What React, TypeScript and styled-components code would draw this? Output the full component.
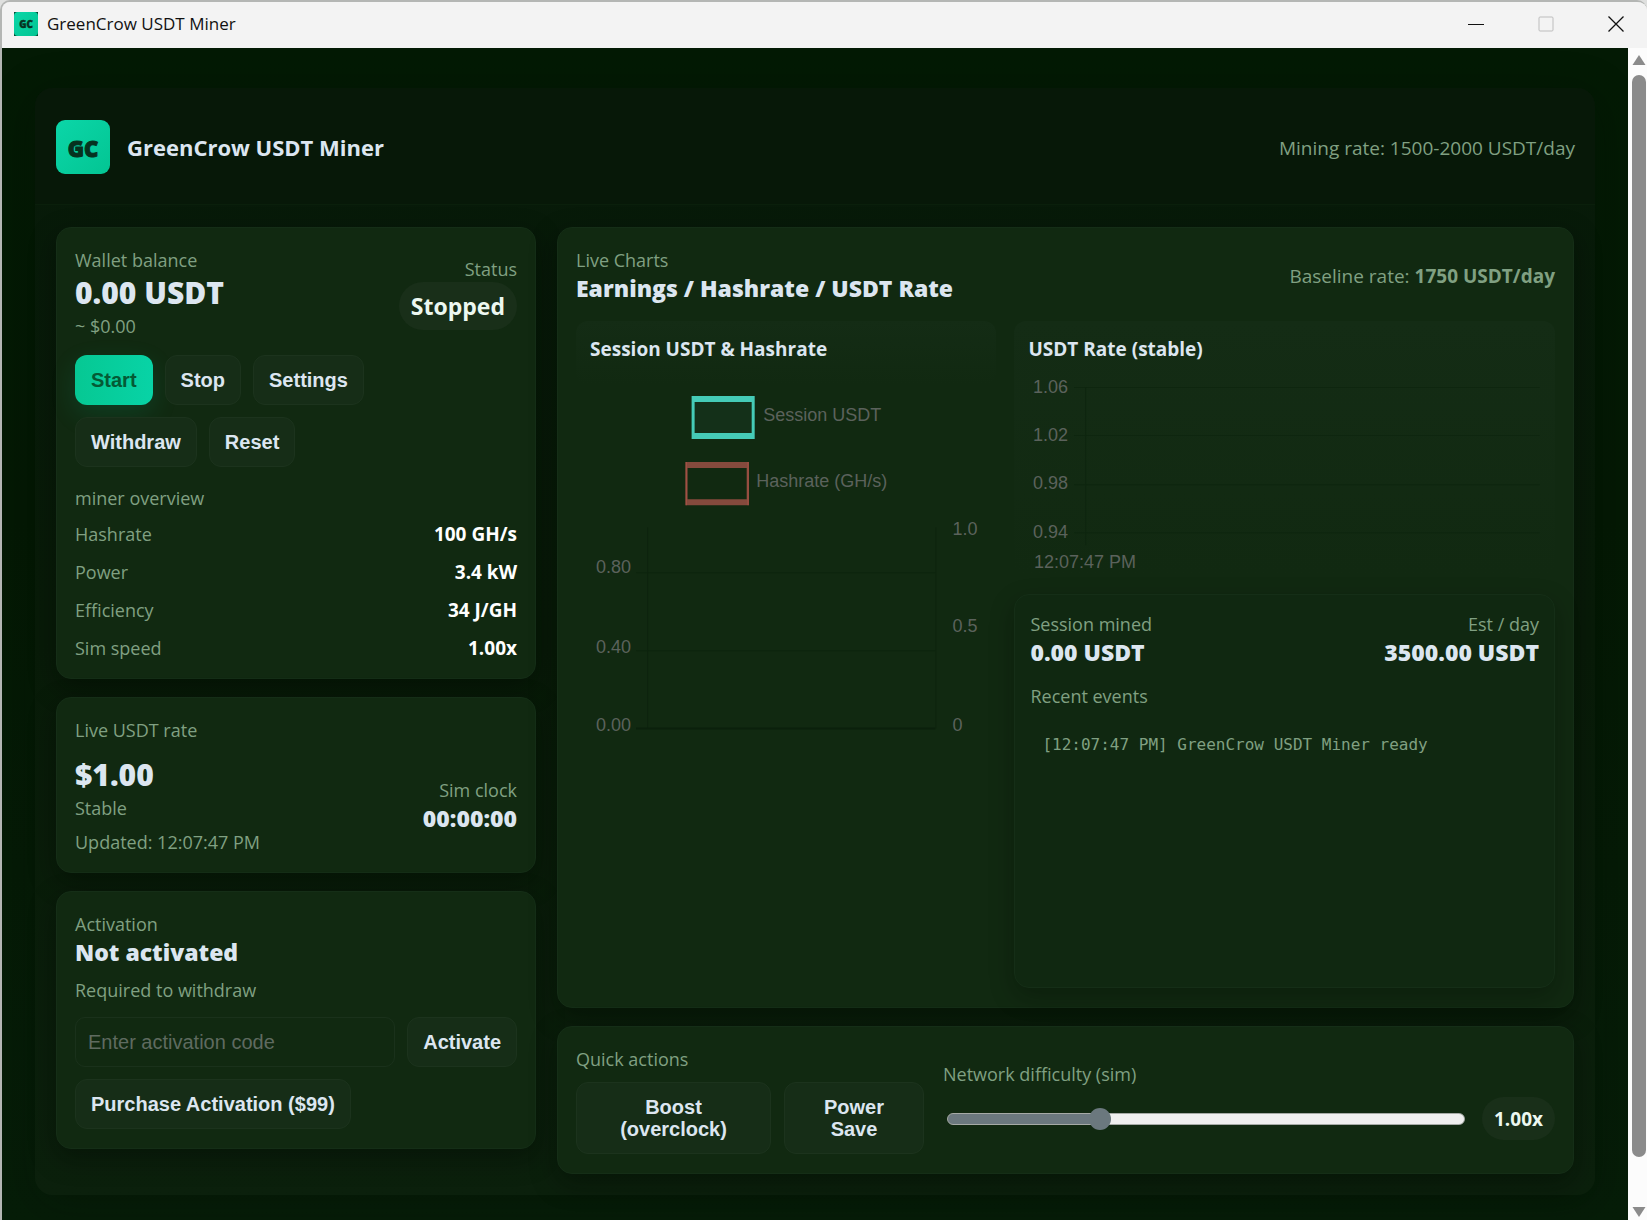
import React, { useState } from "react";
import styled, { createGlobalStyle, css } from "styled-components";

const muted = "#80a082";
const bright = "#dce6f0";
const ui = `"Open Sans", "Noto Sans", sans-serif`;
const arial = `"Liberation Sans", Arial, sans-serif`;

const GlobalStyle = createGlobalStyle`
  *, *::before, *::after { box-sizing: border-box; }
  body { margin: 0; background: #dfe0df; font-family: ${ui}; color: ${bright}; }
`;

const Window = styled.div`
  display: flex;
  flex-direction: column;
  min-height: 100vh;
  border-top: 2px solid #b4b6b4;
  border-left: 2px solid #b4b6b4;
  border-top-left-radius: 10px;
  border-top-right-radius: 10px;
  overflow: hidden;
`;

const TitleBar = styled.header`
  display: flex;
  align-items: center;
  gap: 9px;
  height: 46px;
  padding: 0 0 2px 12px;
  background: #f3f3f3;
  color: #111;
  font-size: 17px;
  line-height: 24px;
`;

const WindowButtons = styled.div`
  display: flex;
  margin-left: auto;
`;

const WindowButton = styled.button`
  display: flex;
  align-items: center;
  justify-content: center;
  width: 70px;
  height: 44px;
  padding: 0;
  border: 0;
  background: none;
  color: #111;
  &:last-child { width: 62px; margin-left: 4px; }
  &:disabled { color: #bdbdbd; }
`;

const Viewport = styled.div`
  display: flex;
  flex: 1;
`;

const Page = styled.main`
  flex: 1;
  min-width: 0;
  padding: 40px 33px 26px;
  background: linear-gradient(180deg, #031a04 0%, #041904 40%, #061d08 100%);
`;

const ScrollBar = styled.div`
  display: flex;
  flex-direction: column;
  align-items: center;
  width: 19px;
  padding: 6px 0 3px 3px;
  gap: 9px;
  background: #fcfcfc;
`;

const ScrollThumb = styled.div`
  flex: 1;
  width: 14px;
  margin-bottom: 40px;
  border-radius: 7px;
  background: #8b8b8b;
`;

const Shell = styled.div`
  border-radius: 18px;
  background: linear-gradient(180deg, #071a09 0%, #081b08 50%, #0b200c 100%);
  box-shadow: 0 9px 45px rgba(0, 10, 0, 0.25);
`;

const AppHeader = styled.div`
  display: flex;
  align-items: center;
  justify-content: space-between;
  padding: 32px 20px 30px 21px;
  border-bottom: 1px solid #0a1f0b;
  border-radius: 18px 18px 0 0;
  background: #071808;
`;

const Brand = styled.div`
  display: flex;
  align-items: center;
  gap: 17px;
`;

const BrandName = styled.h1`
  margin: 0;
  font-size: 22px;
  line-height: 30px;
  font-weight: 700;
`;

const Columns = styled.div`
  display: grid;
  grid-template-columns: 480px minmax(0, 1fr);
  gap: 21px;
  padding: 22px 21px 21px 21px;
`;

const Column = styled.div`
  display: flex;
  flex-direction: column;
  gap: 18px;
`;

const Card = styled.section<{ $tight?: boolean }>`
  padding: 19px 18px ${(p) => (p.$tight ? 17 : 19)}px;
  border: 1px solid #152e17;
  border-radius: 15px;
  background: #112911;
  box-shadow: 0 9px 27px rgba(0, 8, 0, 0.4);
`;

const EventsCard = styled(Card)`
  min-height: 394px;
  padding: 16px 15px;
  background: #102811;
  box-shadow: 0 9px 24px rgba(0, 10, 0, 0.3);
`;

const Split = styled.div<{ $top?: number }>`
  display: flex;
  align-items: center;
  justify-content: space-between;
  margin-top: ${(p) => p.$top ?? 0}px;
`;

const RightBlock = styled.div`
  display: flex;
  flex-direction: column;
  align-items: flex-end;
`;

const Label = styled.div<{ $top?: number }>`
  margin-top: ${(p) => p.$top ?? 0}px;
  color: ${muted};
  font-size: 18px;
  line-height: 26px;
`;

const RateNote = styled(Label)`
  padding-top: 2px;
  font-size: 19px;
`;

const Balance = styled.div`
  font-size: 30px;
  line-height: 40px;
  font-weight: 800;
`;

const Strong = styled.div`
  font-size: 23px;
  line-height: 30px;
  font-weight: 800;
`;

const Pill = styled.div<{ $small?: boolean }>`
  display: flex;
  align-items: center;
  height: ${(p) => (p.$small ? 43 : 48)}px;
  padding: 0 12px;
  border-radius: 24px;
  background: #192f19;
  color: #ecf8f0;
  font-weight: 700;
  font-size: ${(p) => (p.$small ? 19 : 23)}px;
`;

const Buttons = styled.div<{ $top: number }>`
  display: flex;
  flex-wrap: wrap;
  gap: 12px;
  margin-top: ${(p) => p.$top}px;
`;

const Button = styled.button<{ $primary?: boolean; $stacked?: boolean }>`
  height: 50px;
  padding: 0 15px;
  border: 1px solid #1c331d;
  border-radius: 12px;
  background: #162d17;
  color: ${bright};
  font: 700 20px/22px ${arial};
  ${(p) =>
    p.$primary &&
    css`
      padding: 0 16px;
      border: 0;
      background: linear-gradient(90deg, #06c893, #08d3a6);
      color: #045a35;
      box-shadow: 0 9px 27px rgba(6, 200, 150, 0.14);
    `}
  ${(p) =>
    p.$stacked &&
    css`
      height: 72px;
      padding: 0;
    `}
`;

const Stats = styled.dl`
  display: grid;
  gap: 12px;
  margin: 10px 0 0;
`;

const Stat = styled.div`
  display: flex;
  justify-content: space-between;
  color: ${muted};
  font-size: 18px;
  line-height: 26px;
  dd { margin: 0; color: #fff; font-size: 19px; font-weight: 700; }
`;

const CodeRow = styled.form`
  display: flex;
  gap: 12px;
  margin-top: 14px;
`;

const CodeInput = styled.input`
  flex: 1;
  min-width: 0;
  height: 50px;
  padding: 0 12px;
  border: 1px solid #1a311b;
  border-radius: 10px;
  background: transparent;
  color: ${bright};
  font: 20px ${arial};
  &::placeholder { color: #5f6b60; opacity: 1; }
`;

const Charts = styled.div`
  display: grid;
  grid-template-columns: minmax(0, 7fr) minmax(0, 9fr);
  align-items: start;
  gap: 18px;
  margin-top: 18px;
`;

const ChartBox = styled.div<{ $short?: boolean }>`
  height: ${(p) => (p.$short ? 64 : 255)}px;
  padding: 15px 14px;
  border-radius: 12px;
  background: linear-gradient(180deg, #142c15, #112911);
`;

const ChartTitle = styled.h2`
  margin: 0 0 8px;
  font-size: 19px;
  line-height: 26px;
  font-weight: 700;
`;

const ChartSvg = styled.svg`
  display: block;
  width: 100%;
  overflow: visible;
  font-family: ${arial};
  font-size: 18px;
  text { fill: #5b625c; }
`;

const Log = styled.pre`
  margin: 12px 0 0;
  padding: 12px;
  color: ${muted};
  font: 16px/24px "DejaVu Sans Mono", monospace;
`;

const Quick = styled.div`
  display: flex;
  align-items: flex-start;
  gap: 19px;
`;

const QuickButtons = styled.div`
  display: grid;
  grid-template-columns: 195px 140px;
  gap: 13px;
  margin-top: 10px;
`;

const Difficulty = styled.div`
  flex: 1;
  min-width: 0;
  padding-top: 15px;
  label { display: block; color: ${muted}; font-size: 18px; line-height: 26px; }
`;

const SliderRow = styled.div`
  display: flex;
  align-items: center;
  gap: 17px;
  margin-top: 10px;
`;

const Slider = styled.input`
  appearance: none;
  flex: 1;
  min-width: 0;
  height: 22px;
  margin: 0 0 0 4px;
  background: none;
  &::-webkit-slider-runnable-track {
    height: 12px;
    border: 1px solid #a6aaa6;
    border-radius: 6px;
    background: linear-gradient(90deg, #6b787e var(--fill), #efefef var(--fill));
    background-origin: border-box;
  }
  &::-webkit-slider-thumb {
    appearance: none;
    width: 22px;
    height: 22px;
    margin-top: -6px;
    border-radius: 50%;
    background: #6b787e;
  }
`;

const LogoText = styled.text`
  font: 800 22px ${ui};
  fill: #06321f;
  stroke: #06321f;
  stroke-width: 1px;
  text-anchor: middle;
`;

const stats = [
  ["Hashrate", "100 GH/s"],
  ["Power", "3.4 kW"],
  ["Efficiency", "34 J/GH"],
  ["Sim speed", "1.00x"],
];

function Logo({ size }: { size: number }) {
  const id = `logo-${size}`;
  return (
    <svg width={size} height={size} viewBox="0 0 54 54" aria-hidden="true">
      <defs>
        <linearGradient id={id} x1="0" y1="0" x2="1" y2="1">
          <stop offset="0" stopColor="#0bd6a8" />
          <stop offset="1" stopColor="#03c593" />
        </linearGradient>
      </defs>
      {size < 30 && <rect width="54" height="54" fill="#06452f" />}
      <rect width="54" height="54" rx="9" fill={`url(#${id})`} />
      <LogoText x="27" y="37">GC</LogoText>
    </svg>
  );
}

function SessionChart() {
  return (
    <ChartSvg viewBox="0 7 392 370">
      <g stroke="#0d240e">
        <path d="M46 209.500H345M46 287.500H345" />
        <path d="M57.500 164V365M345.500 164V365" />
      </g>
      <path d="M46 365H345" stroke="#0b200c" strokeWidth="2" />
      <rect x="102" y="33" width="62" height="42" fill="#143019" />
      <path d="M101.500 33h63v43h-63z M104.500 39v31h57v-31z" fill="#45cbb7" fillRule="evenodd" />
      <path d="M95.500 99h63v43h-63z M97.500 105v31h59v-31z" fill="#854a3d" fillRule="evenodd" />
      <path d="M96 99V142M158 99V142" stroke="#b4564b" />
      <text x="173" y="58">Session USDT</text>
      <text x="166" y="124">Hashrate (GH/s)</text>
      <text x="6" y="210">0.80</text>
      <text x="6" y="290">0.40</text>
      <text x="6" y="368">0.00</text>
      <text x="362" y="172">1.0</text>
      <text x="362" y="269">0.5</text>
      <text x="362" y="368">0</text>
    </ChartSvg>
  );
}

function RateChart() {
  return (
    <ChartSvg viewBox="0 0 512 200">
      <g stroke="#0e260f">
        <path d="M46 17.500H511M46 65.500H511M46 114.500H511M46 162.500H511" />
        <path d="M57.500 17V175" />
      </g>
      <text x="5" y="23">1.06</text>
      <text x="5" y="71">1.02</text>
      <text x="5" y="119">0.98</text>
      <text x="5" y="168">0.94</text>
      <text x="6" y="198">12:07:47 PM</text>
    </ChartSvg>
  );
}

export default function App() {
  const [difficulty, setDifficulty] = useState(1);
  const [code, setCode] = useState("");
  const fill = { "--fill": `${((difficulty - 0.2) / 2.8) * 100}%` } as React.CSSProperties;

  return (
    <>
      <GlobalStyle />
      <Window>
        <TitleBar>
          <Logo size={24} />
          <span>GreenCrow USDT Miner</span>
          <WindowButtons>
            <WindowButton aria-label="Minimize">
              <svg width="16" height="16"><path d="M0 8.500H16" stroke="currentColor" /></svg>
            </WindowButton>
            <WindowButton aria-label="Maximize" disabled>
              <svg width="16" height="16"><rect x="1" y="1" width="14" height="14" rx="1" fill="none" stroke="currentColor" /></svg>
            </WindowButton>
            <WindowButton aria-label="Close">
              <svg width="16" height="16"><path d="M.5.5l15 15M15.500.5l-15 15" stroke="currentColor" strokeWidth="1.300" /></svg>
            </WindowButton>
          </WindowButtons>
        </TitleBar>
        <Viewport>
          <Page>
            <Shell>
              <AppHeader>
                <Brand>
                  <Logo size={54} />
                  <BrandName>GreenCrow USDT Miner</BrandName>
                </Brand>
                <RateNote>Mining rate: 1500-2000 USDT/day</RateNote>
              </AppHeader>
              <Columns>
                <Column>
                  <Card $tight>
                    <Split>
                      <div>
                        <Label>Wallet balance</Label>
                        <Balance>0.00 USDT</Balance>
                        <Label>~ $0.00</Label>
                      </div>
                      <RightBlock>
                        <Label>Status</Label>
                        <Pill>Stopped</Pill>
                      </RightBlock>
                    </Split>
                    <Buttons $top={16}>
                      <Button $primary>Start</Button>
                      <Button>Stop</Button>
                      <Button>Settings</Button>
                    </Buttons>
                    <Buttons $top={12}>
                      <Button>Withdraw</Button>
                      <Button>Reset</Button>
                    </Buttons>
                    <Label $top={18}>miner overview</Label>
                    <Stats>
                      {stats.map(([name, value]) => (
                        <Stat key={name}>
                          <dt>{name}</dt>
                          <dd>{value}</dd>
                        </Stat>
                      ))}
                    </Stats>
                  </Card>
                  <Card $tight>
                    <Label>Live USDT rate</Label>
                    <Split $top={12}>
                      <div>
                        <Balance>$1.00</Balance>
                        <Label>Stable</Label>
                        <Label $top={8}>Updated: 12:07:47 PM</Label>
                      </div>
                      <RightBlock>
                        <Label>Sim clock</Label>
                        <Strong>00:00:00</Strong>
                      </RightBlock>
                    </Split>
                  </Card>
                  <Card>
                    <Label>Activation</Label>
                    <Strong>Not activated</Strong>
                    <Label $top={10}>Required to withdraw</Label>
                    <CodeRow onSubmit={(e) => e.preventDefault()}>
                      <CodeInput
                        aria-label="Activation code"
                        placeholder="Enter activation code"
                        value={code}
                        onChange={(e) => setCode(e.target.value)}
                      />
                      <Button type="submit">Activate</Button>
                    </CodeRow>
                    <Buttons $top={12}>
                      <Button>Purchase Activation ($99)</Button>
                    </Buttons>
                  </Card>
                </Column>
                <Column>
                  <Card>
                    <Split>
                      <div>
                        <Label>Live Charts</Label>
                        <Strong>Earnings / Hashrate / USDT Rate</Strong>
                      </div>
                      <RateNote>
                        Baseline rate: <b>1750 USDT/day</b>
                      </RateNote>
                    </Split>
                    <Charts>
                      <ChartBox $short>
                        <ChartTitle>Session USDT &amp; Hashrate</ChartTitle>
                        <SessionChart />
                      </ChartBox>
                      <Column>
                        <ChartBox>
                          <ChartTitle>USDT Rate (stable)</ChartTitle>
                          <RateChart />
                        </ChartBox>
                        <EventsCard>
                          <Split>
                            <div>
                              <Label>Session mined</Label>
                              <Strong>0.00 USDT</Strong>
                            </div>
                            <RightBlock>
                              <Label>Est / day</Label>
                              <Strong>3500.00 USDT</Strong>
                            </RightBlock>
                          </Split>
                          <Label $top={16}>Recent events</Label>
                          <Log>[12:07:47 PM] GreenCrow USDT Miner ready</Log>
                        </EventsCard>
                      </Column>
                    </Charts>
                  </Card>
                  <Card>
                    <Quick>
                      <div>
                        <Label>Quick actions</Label>
                        <QuickButtons>
                          <Button $stacked>Boost<br />(overclock)</Button>
                          <Button $stacked>Power<br />Save</Button>
                        </QuickButtons>
                      </div>
                      <Difficulty>
                        <label htmlFor="difficulty">Network difficulty (sim)</label>
                        <SliderRow>
                          <Slider
                            id="difficulty"
                            type="range"
                            min="0.2"
                            max="3"
                            step="0.1"
                            value={difficulty}
                            style={fill}
                            onChange={(e) => setDifficulty(Number(e.target.value))}
                          />
                          <Pill $small>{difficulty.toFixed(2)}x</Pill>
                        </SliderRow>
                      </Difficulty>
                    </Quick>
                  </Card>
                </Column>
              </Columns>
            </Shell>
          </Page>
          <ScrollBar aria-hidden="true">
            <svg width="14" height="12" fill="#8b8b8b"><path d="M7 1L13.500 11H.5z" /></svg>
            <ScrollThumb />
            <svg width="14" height="12" fill="#8b8b8b"><path d="M.5 1H13.500L7 11z" /></svg>
          </ScrollBar>
        </Viewport>
      </Window>
    </>
  );
}
